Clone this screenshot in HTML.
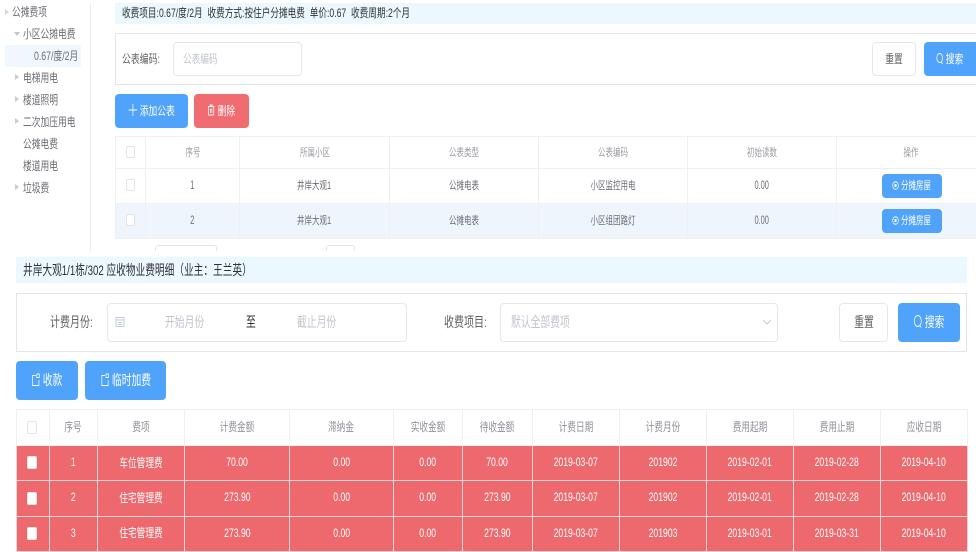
<!DOCTYPE html>
<html><head><meta charset="utf-8">
<style>
*{box-sizing:border-box}
html,body{margin:0;padding:0;background:#fff}
body{width:976px;height:552px;overflow:hidden;position:relative;font-family:"Liberation Sans","Noto Sans CJK SC",sans-serif;color:#606266;filter:blur(.3px)}
.a{position:absolute}
.t{position:absolute;white-space:nowrap;transform-origin:0 50%;transform:scaleX(.72);font-size:12px;line-height:14px}
.l{font-size:14px;line-height:15px;transform:scaleX(.7)}
.btn{position:absolute;border-radius:4px;background:#50a3fb;color:#fff;text-align:center;white-space:nowrap;font-size:12px}
.btn span{display:inline-block;transform:scaleX(.73)}
.big{font-size:14px}
.big span{transform:scaleX(.7)}
.sm{font-size:11px}
.sm span{transform:scaleX(.68)}
.red{background:#f06c70}
.plain{background:#fff;border:1px solid #e6e7ec;color:#606266}
.box{position:absolute;border:1px solid #e4e5ea;background:#fff}
.in{position:absolute;border:1px solid #e6e7ec;border-radius:4px;background:#fff}
table{position:absolute;border-collapse:collapse;table-layout:fixed}
td,th{padding:0;text-align:center;font-weight:normal;white-space:nowrap;overflow:hidden}
td span,th span{display:inline-block;position:relative;top:-1px}
.top td,.top th{border:1px solid #eff0f5;font-size:11px;height:35px;color:#6b6e75}
.top td span,.top th span{transform:scaleX(.68)}
.top td span.n{font-size:12px;transform:scaleX(.62)}
.top th{color:#999ca3;height:32px}
.top tr.h td{background:#eef5fd}
.bot td span,.bot th span{transform:scaleX(.72)}
.bot th{border:1px solid #eff0f5;height:36px;color:#8f9299;background:#fff;font-size:12px}
.bot td{background:#ee696e;color:#fff;border:1px solid #f7d5d6;height:35.3px;font-size:12px}
.cb{display:inline-block;width:9px;height:12px;border:1px solid #e2e4e9;border-radius:2px;background:#fff;vertical-align:middle;position:relative;top:-1px}
.bot .cb{width:10px;height:13px;left:-1px}
.side{color:#6a6d73;transform:scaleX(.73)}
.ar{position:absolute;width:0;height:0;border-left:4px solid #c8cbd0;border-top:3px solid transparent;border-bottom:3px solid transparent}
.ad{position:absolute;width:0;height:0;border-top:4px solid #c0c4cc;border-left:3px solid transparent;border-right:3px solid transparent}
svg{vertical-align:-1px}
</style></head>
<body>

<!-- sidebar -->
<div class="a" style="left:90px;top:3px;width:1px;height:248px;background:#eeeff3"></div>
<div class="a" style="left:5px;top:45px;width:76px;height:22px;background:#f0f7ff"></div>
<div class="ar" style="left:5px;top:9px;border-left-color:#d5d7da"></div>
<div class="ad" style="left:14px;top:32px"></div>
<div class="ar" style="left:15px;top:74px"></div>
<div class="ar" style="left:15px;top:96px"></div>
<div class="ar" style="left:15px;top:118px"></div>
<div class="ar" style="left:15px;top:184px"></div>
<div class="t side" style="left:12px;top:5px">公摊费项</div>
<div class="t side" style="left:23px;top:27px">小区公摊电费</div>
<div class="t side" style="left:34px;top:49px">0.67/度/2月</div>
<div class="t side" style="left:23px;top:71px">电梯用电</div>
<div class="t side" style="left:23px;top:93px">楼道照明</div>
<div class="t side" style="left:23px;top:115px">二次加压用电</div>
<div class="t side" style="left:23px;top:137px">公摊电费</div>
<div class="t side" style="left:23px;top:159px">楼道用电</div>
<div class="t side" style="left:23px;top:181px">垃圾费</div>

<!-- top section -->
<div class="a" style="left:115px;top:3px;width:861px;height:21px;background:#ecf8ff"></div>
<div class="t" style="left:122px;top:6px;color:#303133">收费项目:0.67/度/2月&nbsp; 收费方式:按住户分摊电费&nbsp; 单价:0.67&nbsp; 收费周期:2个月</div>
<div class="box" style="left:115px;top:33px;width:870px;height:52px"></div>
<div class="t" style="left:122px;top:52px;color:#606266;transform:scaleX(.74)">公表编码:</div>
<div class="in" style="left:173px;top:42px;width:129px;height:34px"></div>
<div class="t" style="left:183px;top:52px;color:#c0c4cc">公表编码</div>
<div class="btn plain" style="left:872px;top:42px;width:44px;height:34px;line-height:32px"><span>重置</span></div>
<div class="btn" style="left:924px;top:42px;width:60px;height:34px;line-height:34px;padding-right:8px"><span><svg width="10" height="11" viewBox="0 0 10 11"><ellipse cx="5" cy="5" rx="4" ry="4.500" fill="none" stroke="#fff"/><path d="M7 9l2 2" stroke="#fff"/></svg> 搜索</span></div>
<div class="btn" style="left:115px;top:94px;width:73px;height:34px;line-height:34px"><span><svg width="12" height="12" viewBox="0 0 12 12"><path d="M6 0v12M0 6h12" stroke="#fff"/></svg> 添加公表</span></div>
<div class="btn red" style="left:194px;top:94px;width:55px;height:34px;line-height:34px"><span><svg width="11" height="12" viewBox="0 0 11 12"><path d="M1 2.500h9M4 2.500V1h3v1.500M2 2.500V11h7V2.500M4.500 4.500v4.500M6.500 4.500v4.500" stroke="#fff" fill="none"/></svg> 删除</span></div>

<table class="top" style="left:115px;top:136px;width:870px">
<colgroup><col style="width:30px"><col style="width:94px"><col style="width:150px"><col style="width:149px"><col style="width:149px"><col style="width:149px"><col style="width:149px"></colgroup>
<tr><th><i class="cb"></i></th><th><span>序号</span></th><th><span>所属小区</span></th><th><span>公表类型</span></th><th><span>公表编码</span></th><th><span>初始读数</span></th><th><span>操作</span></th></tr>
<tr><td><i class="cb"></i></td><td><span class="n">1</span></td><td><span>井岸大观1</span></td><td><span>公摊电表</span></td><td><span>小区监控用电</span></td><td><span class="n">0.00</span></td><td></td></tr>
<tr class="h"><td><i class="cb"></i></td><td><span class="n">2</span></td><td><span>井岸大观1</span></td><td><span>公摊电表</span></td><td><span>小区组团路灯</span></td><td><span class="n">0.00</span></td><td></td></tr>
</table>
<div class="btn sm" style="left:882px;top:174px;width:60px;height:24px;line-height:24px"><span><svg width="10" height="9" viewBox="0 0 10 9"><ellipse cx="5" cy="4.500" rx="4.200" ry="3.800" fill="none" stroke="#fff"/><ellipse cx="5" cy="4.500" rx="1.800" ry="1.500" fill="#fff"/></svg> 分摊房屋</span></div>
<div class="btn sm" style="left:882px;top:209px;width:60px;height:24px;line-height:24px"><span><svg width="10" height="9" viewBox="0 0 10 9"><ellipse cx="5" cy="4.500" rx="4.200" ry="3.800" fill="none" stroke="#fff"/><ellipse cx="5" cy="4.500" rx="1.800" ry="1.500" fill="#fff"/></svg> 分摊房屋</span></div>
<div class="a" style="left:155px;top:245px;width:62px;height:12px;border:1px solid #e4e5ea;border-radius:3px"></div>
<div class="a" style="left:326px;top:245px;width:29px;height:12px;border:1px solid #e4e5ea;border-radius:3px"></div>
<div class="a" style="left:0;top:251px;width:976px;height:301px;background:#fff"></div>

<!-- bottom section -->
<div class="a" style="left:16px;top:257px;width:951px;height:26px;background:#ecf8ff"></div>
<div class="t l" style="left:23px;top:263px;color:#303133;transform:scaleX(.692)">井岸大观1/1栋/302 应收物业费明细（业主：王兰英）</div>
<div class="box" style="left:16px;top:293px;width:951px;height:59px"></div>
<div class="t l" style="left:50px;top:315px;transform:scaleX(.715)">计费月份:</div>
<div class="in" style="left:107px;top:303px;width:300px;height:39px"></div>
<svg class="a" style="left:115px;top:316px" width="10" height="12" viewBox="0 0 10 12"><path d="M1 1.500h8v9H1zM1 4h8M3 6.500h4M3 8.500h4" fill="none" stroke="#c3cbdc"/></svg>
<div class="t l" style="left:165px;top:315px;color:#c0c4cc">开始月份</div>
<div class="t l" style="left:246px;top:315px;color:#303133">至</div>
<div class="t l" style="left:297px;top:315px;color:#c0c4cc">截止月份</div>
<div class="t l" style="left:444px;top:315px;transform:scaleX(.715)">收费项目:</div>
<div class="in" style="left:500px;top:303px;width:278px;height:39px"></div>
<div class="t l" style="left:511px;top:315px;color:#c0c4cc">默认全部费项</div>
<svg class="a" style="left:762px;top:319px" width="10" height="7" viewBox="0 0 10 7"><path d="M1 1l4 4 4-4" fill="none" stroke="#c8cbd1"/></svg>
<div class="btn plain big" style="left:839px;top:303px;width:49px;height:39px;line-height:37px"><span>重置</span></div>
<div class="btn big" style="left:898px;top:303px;width:62px;height:39px;line-height:39px"><span><svg width="12" height="13" viewBox="0 0 12 13"><ellipse cx="6" cy="6" rx="5" ry="5.500" fill="none" stroke="#fff"/><path d="M9 10.500l2 2" stroke="#fff"/></svg> 搜索</span></div>
<div class="btn big" style="left:16px;top:361px;width:62px;height:39px;line-height:39px"><span><svg width="12" height="13" viewBox="0 0 12 13"><path d="M6 2.500H1.500v10h9V7M7.500 1h3.500v3.500H7.500z" fill="none" stroke="#fff"/></svg> 收款</span></div>
<div class="btn big" style="left:85px;top:361px;width:81px;height:39px;line-height:39px"><span><svg width="12" height="13" viewBox="0 0 12 13"><path d="M6 2.500H1.500v10h9V7M7.500 1h3.500v3.500H7.500z" fill="none" stroke="#fff"/></svg> 临时加费</span></div>

<table class="bot" style="left:16px;top:409px;width:951px">
<colgroup><col style="width:33px"><col style="width:48px"><col style="width:87px"><col style="width:105px"><col style="width:104px"><col style="width:69px"><col style="width:70px"><col style="width:87px"><col style="width:87px"><col style="width:87px"><col style="width:87px"><col style="width:87px"></colgroup>
<tr><th><i class="cb"></i></th><th><span>序号</span></th><th><span>费项</span></th><th><span>计费金额</span></th><th><span>滞纳金</span></th><th><span>实收金额</span></th><th><span>待收金额</span></th><th><span>计费日期</span></th><th><span>计费月份</span></th><th><span>费用起期</span></th><th><span>费用止期</span></th><th><span>应收日期</span></th></tr>
<tr><td><i class="cb"></i></td><td><span>1</span></td><td><span>车位管理费</span></td><td><span>70.00</span></td><td><span>0.00</span></td><td><span>0.00</span></td><td><span>70.00</span></td><td><span>2019-03-07</span></td><td><span>201902</span></td><td><span>2019-02-01</span></td><td><span>2019-02-28</span></td><td><span>2019-04-10</span></td></tr>
<tr><td><i class="cb"></i></td><td><span>2</span></td><td><span>住宅管理费</span></td><td><span>273.90</span></td><td><span>0.00</span></td><td><span>0.00</span></td><td><span>273.90</span></td><td><span>2019-03-07</span></td><td><span>201902</span></td><td><span>2019-02-01</span></td><td><span>2019-02-28</span></td><td><span>2019-04-10</span></td></tr>
<tr><td><i class="cb"></i></td><td><span>3</span></td><td><span>住宅管理费</span></td><td><span>273.90</span></td><td><span>0.00</span></td><td><span>0.00</span></td><td><span>273.90</span></td><td><span>2019-03-07</span></td><td><span>201903</span></td><td><span>2019-03-01</span></td><td><span>2019-03-31</span></td><td><span>2019-04-10</span></td></tr>
</table>
</body></html>
